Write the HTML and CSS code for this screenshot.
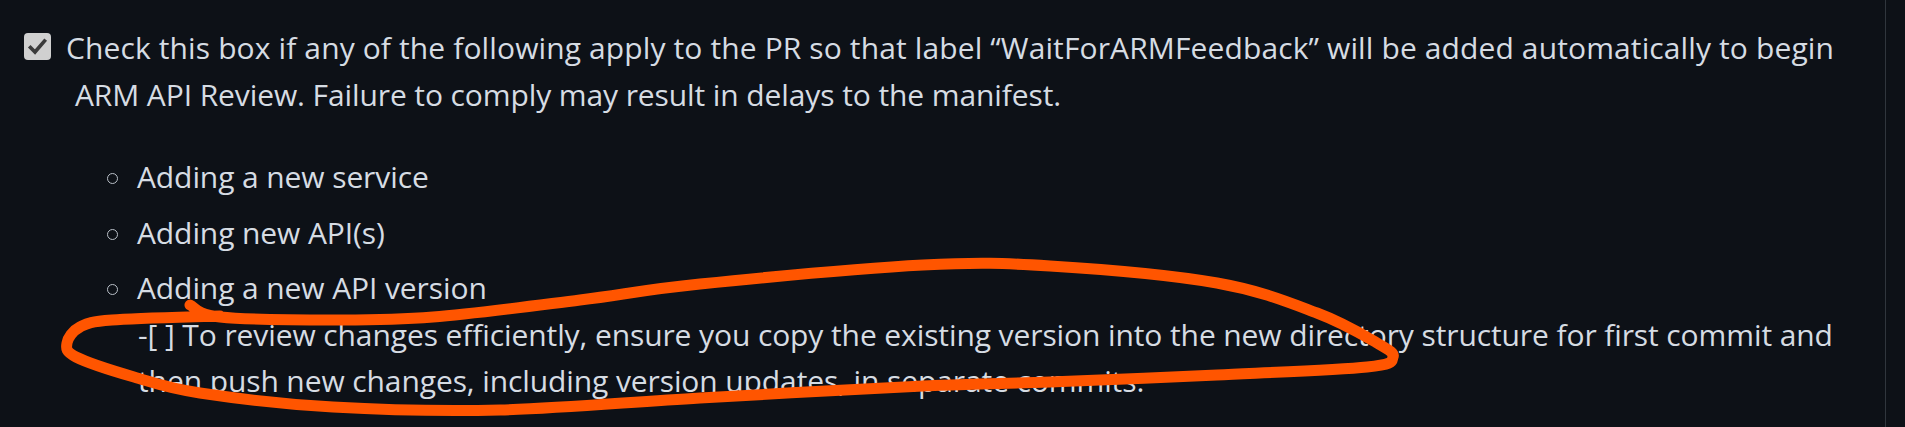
FILE: index.html
```html
<!DOCTYPE html>
<html lang="en">
<head>
<meta charset="utf-8">
<title>Task list</title>
<link rel="stylesheet" href="styles.css">
</head>
<body>
<div class="page">
  <div class="markdown">
    <p class="task"><span class="checkbox"><svg viewBox="0 0 27 27" width="27" height="27"><path d="M6.5 14.5 L11 19 L20.5 8" fill="none" stroke="#3b3b3b" stroke-width="3.6" stroke-linecap="square" stroke-linejoin="miter"/></svg></span><span class="wide">Check this box if any of the following apply to the PR so that label “WaitForARMFeedback” will be added automatically to begin</span><br>ARM API Review. Failure to comply may result in delays to the manifest.</p>
    <ul class="sublist">
      <li>Adding a new service</li>
      <li>Adding new API(s)</li>
      <li>Adding a new API version<br>-[ ] To review changes efficiently, ensure you copy the existing version into the new directory structure for first commit and<br>then push new changes, including version updates, in separate commits.</li>
    </ul>
  </div>
  <svg class="scribble" viewBox="0 0 1905 427" width="1905" height="427">
    <path d="M190 305 C195 307 196 314.5 220 317 C244 319.5 297.5 320 333 320 C368.5 320 391.8 320.3 433 317 C474.2 313.7 535.5 305.5 580 300 C624.5 294.5 642.8 289.8 700 284 C757.2 278.2 864.7 268 923 265 C981.3 262 1001 263 1050 266 C1099 269 1172.5 275.2 1217 283 C1261.5 290.8 1290.3 303 1317 313 C1343.7 323 1364.3 335.7 1377 343 C1389.7 350.3 1394.7 353 1393 357 C1391.3 361 1396.3 364 1367 367 C1337.7 370 1269.8 372.5 1217 375 C1164.2 377.5 1099 380.2 1050 382 C1001 383.8 981.3 383.3 923 386 C864.7 388.7 770.5 394 700 398 C629.5 402 561.2 408.5 500 410 C438.8 411.5 383 409.8 333 407 C283 404.2 233.2 398 200 393 C166.8 388 154.7 383 134 377 C113.3 371 87.2 362.7 76 357 C64.8 351.3 66.3 348 67 343 C67.7 338 72.5 330.8 80 327 C87.5 323.2 88.7 321.8 112 320 C135.3 318.2 202 316.7 220 316" fill="none" stroke="#ff5500" stroke-width="11" stroke-linecap="round" stroke-linejoin="round"/>
  </svg>
</div>
</body>
</html>
```
FILE: styles.css
```css
html, body {
  margin: 0;
  padding: 0;
  background: #0d1117;
}

.page {
  position: relative;
  width: 1886px;
  height: 427px;
  box-sizing: border-box;
  border-right: 1px solid #30363d;
  overflow: hidden;
}

.markdown {
  font-family: "Open Sans", "Noto Sans", sans-serif;
  font-size: 30px;
  line-height: 46.5px;
  letter-spacing: -0.1px;
  color: #d6dce3;
  padding-top: 25px;
  white-space: nowrap;
}

.task {
  margin: 0;
  padding-left: 75px;
}

.wide {
  letter-spacing: 0.12px;
}

.checkbox {
  display: inline-block;
  width: 27px;
  height: 27px;
  margin-left: -51px;
  margin-right: 15px;
  vertical-align: -1px;
  background: #d0d0d0;
  border-radius: 4px;
}

.checkbox svg {
  display: block;
}

.sublist {
  list-style: none;
  margin: 36px 0 0 0;
  padding-left: 138px;
}

.sublist li + li {
  margin-top: 9px;
}

.sublist li::before {
  content: "";
  display: inline-block;
  width: 9px;
  height: 9px;
  border: 1.5px solid #b9c0c8;
  border-radius: 50%;
  margin-left: -31px;
  margin-right: 19px;
  vertical-align: 4px;
}

.scribble {
  position: absolute;
  left: 0;
  top: 0;
  pointer-events: none;
}
```
